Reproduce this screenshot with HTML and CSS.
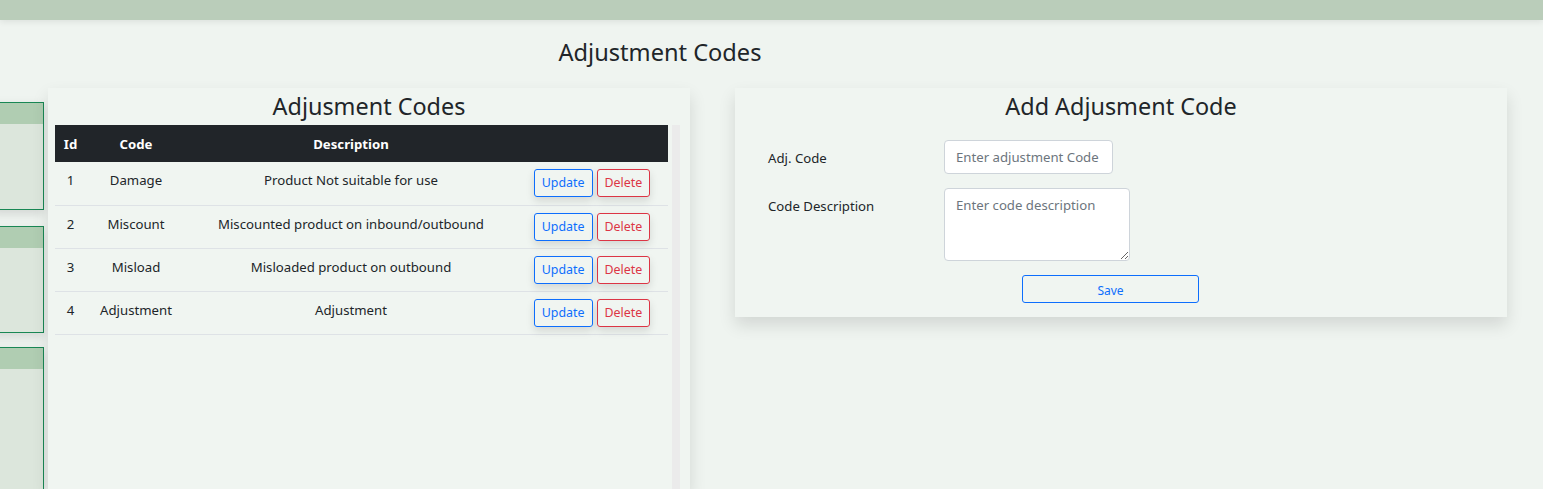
FILE: index.html
```html
<!DOCTYPE html>
<html>
<head>
<meta charset="utf-8">
<link rel="stylesheet" href="styles.css">
</head>
<body>
<div class="topbar"></div>
<div class="page">
  <aside class="sidebar">
    <div class="side-card c1"><div class="side-head"></div></div>
    <div class="side-card c2"><div class="side-head"></div></div>
    <div class="side-card c3"><div class="side-head"></div></div>
  </aside>
  <main class="main">
    <h1 class="page-title">Adjustment Codes</h1>
    <div class="panels">
      <section class="panel list-panel">
        <h2 class="panel-title">Adjusment Codes</h2>
        <div class="table-wrap">
          <table class="codes">
            <thead>
              <tr><th class="c-id">Id</th><th class="c-code">Code</th><th class="c-desc">Description</th><th class="c-act"></th></tr>
            </thead>
            <tbody>
              <tr><td class="c-id">1</td><td class="c-code">Damage</td><td class="c-desc">Product Not suitable for use</td><td class="c-act"><button class="btn btn-blue">Update</button><button class="btn btn-red">Delete</button></td></tr>
              <tr><td class="c-id">2</td><td class="c-code">Miscount</td><td class="c-desc">Miscounted product on inbound/outbound</td><td class="c-act"><button class="btn btn-blue">Update</button><button class="btn btn-red">Delete</button></td></tr>
              <tr><td class="c-id">3</td><td class="c-code">Misload</td><td class="c-desc">Misloaded product on outbound</td><td class="c-act"><button class="btn btn-blue">Update</button><button class="btn btn-red">Delete</button></td></tr>
              <tr><td class="c-id">4</td><td class="c-code">Adjustment</td><td class="c-desc">Adjustment</td><td class="c-act"><button class="btn btn-blue">Update</button><button class="btn btn-red">Delete</button></td></tr>
            </tbody>
          </table>
          <div class="scroll-track"></div>
        </div>
      </section>
      <section class="panel form-panel">
        <h2 class="panel-title">Add Adjusment Code</h2>
        <form class="form">
          <div class="form-row">
            <label class="form-label">Adj. Code</label>
            <input class="form-input" type="text" placeholder="Enter adjustment Code">
          </div>
          <div class="form-row">
            <label class="form-label">Code Description</label>
            <textarea class="form-textarea" placeholder="Enter code description"></textarea>
          </div>
          <div class="form-actions">
            <button type="button" class="btn btn-blue btn-save">Save</button>
          </div>
        </form>
      </section>
    </div>
  </main>
</div>
</body>
</html>
```
FILE: styles.css
```css
* { box-sizing: border-box; }
html, body { margin: 0; padding: 0; }
body {
  background: #eff4f0;
  font-family: "Noto Sans", "Open Sans", sans-serif;
  color: #212529;
  font-size: 13.2px;
  height: 489px;
  overflow: hidden;
}
.topbar {
  height: 20px;
  background: #bacdba;
  box-shadow: 0 2px 6px rgba(0,0,0,0.08);
  position: relative;
  z-index: 2;
}
.page {
  display: flex;
  height: 469px;
}
.sidebar {
  width: 44px;
  flex: none;
  padding-top: 82px;
  display: flex;
  flex-direction: column;
}
.side-card {
  margin-left: -10px;
  width: 54px;
  border: 1px solid #198754;
  background: #dce6dc;
  box-shadow: 0 4px 10px rgba(0,0,0,0.12);
}
.side-head {
  height: 21px;
  background: #b0cdb2;
}
.c1 { height: 108px; }
.c2 { height: 108px; margin-top: 16px; }
.c3 { height: 142px; margin-top: 14px; border-bottom: none; }
.main {
  flex: 1;
  padding-left: 4px;
}
.page-title {
  margin: 0 0 0 -48px;
  width: 1320px;
  padding-top: 18px;
  height: 68px;
  text-align: center;
  font-size: 23.6px;
  font-weight: 400;
  line-height: 29px;
}
.panels {
  display: flex;
  gap: 45px;
  align-items: flex-start;
}
.panel {
  background: #f0f5f1;
  box-shadow: 0 8px 16px rgba(0,0,0,0.12);
}
.panel-title {
  margin: 0;
  text-align: center;
  font-size: 23.4px;
  font-weight: 400;
  line-height: 34px;
  padding-top: 1px;
  height: 37px;
}
.list-panel {
  width: 642px;
  height: 401px;
}
.table-wrap {
  display: flex;
  padding-left: 7px;
  align-items: flex-start;
  height: 364px;
}
.codes {
  width: 613px;
  border-collapse: collapse;
  font-size: 13.2px;
}
.codes th {
  background: #212529;
  color: #fff;
  font-weight: 700;
  font-size: 13.2px;
  height: 37px;
  padding: 0 8px;
}
.codes td {
  height: 43px;
  padding: 8px 8px 0;
  vertical-align: top;
  border-bottom: 1px solid #dee2e6;
  line-height: 20px;
  text-align: center;
}
.codes th.c-id, .codes td.c-id { width: 31px; text-align: center; padding: 0; }
.codes td.c-id { padding-top: 8px; }
.codes .c-code { width: 100px; }
.codes .c-desc { width: 330px; }
.codes td.c-act { padding-top: 7px; white-space: nowrap; }
.scroll-track {
  width: 8px;
  margin-left: 4px;
  height: 364px;
  background: #ebebeb;
}
.btn {
  font-family: inherit;
  background: transparent;
  font-size: 12.4px;
  height: 28px;
  padding: 0 7px;
  border-radius: 3px;
  border: 1px solid;
  box-shadow: 0 4px 8px rgba(0,0,0,0.12);
  cursor: pointer;
  line-height: 26px;
}
.btn-blue { color: #0d6efd; border-color: #0d6efd; }
.btn-red { color: #dc3545; border-color: #dc3545; margin-left: 4px; }
.form-panel {
  width: 772px;
  height: 229px;
}
.form {
  padding: 15px 0 0 33px;
}
.form-row {
  display: flex;
  align-items: flex-start;
  margin-bottom: 14px;
}
.form-label {
  width: 176px;
  flex: none;
  padding-top: 8px;
  line-height: 20px;
}
.form-input, .form-textarea {
  font-family: inherit;
  font-size: 13.2px;
  border: 1px solid #ced4da;
  border-radius: 4px;
  background: #fff;
  color: #212529;
  padding: 6px 11px;
  line-height: 20px;
}
.form-input::placeholder, .form-textarea::placeholder { color: #6c757d; }
.form-input { width: 169px; height: 34px; }
.form-textarea { width: 186px; height: 73px; resize: vertical; }
.form-actions {
  padding-left: 254px;
}
.btn-save {
  width: 177px;
  height: 28px;
  font-size: 12px;
  box-shadow: none;
  border-radius: 3px;
  padding-top: 3px;
  line-height: 22px;
}
```
